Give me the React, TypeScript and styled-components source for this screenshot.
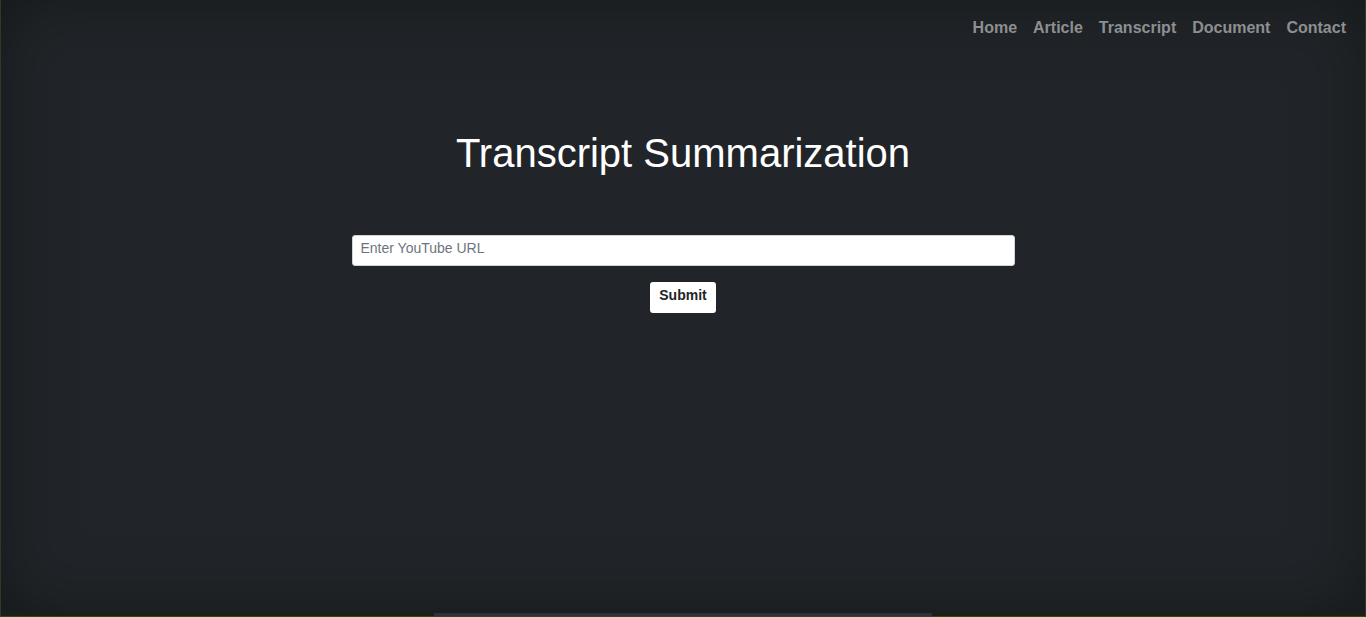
import React from "react";
import styled, { createGlobalStyle } from "styled-components";

const Global = createGlobalStyle`
  html, body { margin: 0; padding: 0; background: #212529; }
  * { box-sizing: border-box; }
`;

const Frame = styled.div`
  height: 617px;
  display: flex;
  flex-direction: column;
  border-left: 1px solid #2c3b25;
  border-right: 1px solid #2c3b25;
  border-bottom: 1px solid #34432c;
  font-family: "Liberation Sans", Arial, sans-serif;
`;

const Main = styled.main`
  flex: 1;
  background: #212529;
  box-shadow: inset 0 0 70px rgba(0, 0, 0, 0.35);
  display: flex;
  flex-direction: column;
  align-items: center;
`;

const Nav = styled.nav`
  align-self: stretch;
  display: flex;
  justify-content: flex-end;
  gap: 16px;
  padding: 18px 19px 0;
`;

const NavLink = styled.a`
  color: #8d8f91;
  font-size: 16px;
  font-weight: 700;
  line-height: 20px;
  text-decoration: none;
`;

const Title = styled.h1`
  margin: 91px 0 0;
  color: #ffffff;
  font-size: 40px;
  font-weight: 400;
  line-height: 48px;
`;

const Form = styled.form`
  margin-top: 58px;
  display: flex;
  flex-direction: column;
  align-items: center;
  gap: 16px;
`;

const UrlInput = styled.input`
  width: 663px;
  height: 31px;
  border: 1px solid #ced4da;
  border-radius: 3px;
  background: #fff;
  padding: 0 8px 6px;
  font-family: "Liberation Sans", Arial, sans-serif;
  font-size: 14px;
  color: #212529;
  outline: none;
  &::placeholder { color: #6c757d; }
`;

const SubmitButton = styled.button`
  width: 66px;
  height: 31px;
  border: none;
  border-radius: 3px;
  background: #fff;
  color: #212529;
  font-family: "Liberation Sans", Arial, sans-serif;
  font-size: 14px;
  font-weight: 700;
  padding: 0 0 6px;
  cursor: pointer;
`;

const BottomBar = styled.div`
  height: 3px;
  background: #17220f;
  display: flex;
  padding-left: 433px;
`;

const BarThumb = styled.div`
  width: 498px;
  background: #2e303b;
`;

export default function App() {
  return (
    <>
      <Global />
      <Frame>
        <Main>
          <Nav>
            <NavLink href="#">Home</NavLink>
            <NavLink href="#">Article</NavLink>
            <NavLink href="#">Transcript</NavLink>
            <NavLink href="#">Document</NavLink>
            <NavLink href="#">Contact</NavLink>
          </Nav>
          <Title>Transcript Summarization</Title>
          <Form onSubmit={(e) => e.preventDefault()}>
            <UrlInput type="text" placeholder="Enter YouTube URL" />
            <SubmitButton type="submit">Submit</SubmitButton>
          </Form>
        </Main>
        <BottomBar>
          <BarThumb />
        </BottomBar>
      </Frame>
    </>
  );
}
